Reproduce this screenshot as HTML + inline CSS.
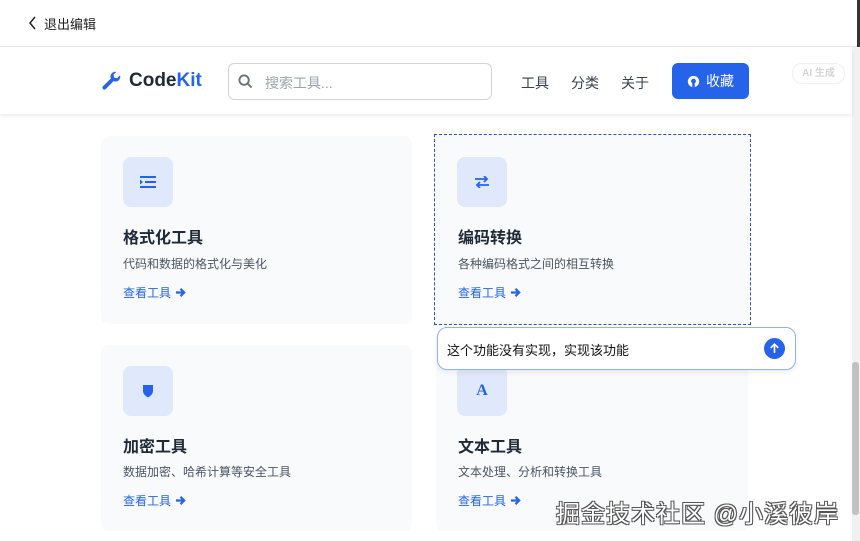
<!DOCTYPE html>
<html><head><meta charset="utf-8"><style>
*{box-sizing:border-box;margin:0;padding:0}
body{width:860px;height:541px;overflow:hidden;background:#fff;font-family:"Liberation Sans","Noto Sans CJK SC",sans-serif;position:relative}
.abs{position:absolute}
.top{left:0;top:0;width:860px;height:47px;background:#fff;border-bottom:1px solid #e5e7eb}
.nav{left:0;top:48px;width:852px;height:66px;background:#fff;box-shadow:0 2px 4px rgba(0,0,0,.08)}
.card{background:#f9fafb;border-radius:8px}
.ib{width:50px;height:50px;background:#e0e8fb;border-radius:8px;display:flex;align-items:center;justify-content:center;color:#2563eb}
.t{font-size:16px;font-weight:bold;color:#1f2937}
.d{font-size:12px;color:#4b5563}
.l{font-size:12px;color:#2563eb;display:flex;align-items:center;gap:4px}
</style></head><body>
<div class="abs top"></div>
<div class="abs" style="left:857px;top:0;width:3px;height:47px;background:#333"></div>
<svg class="abs" style="left:28px;top:16px" width="10" height="14" viewBox="0 0 10 14"><path d="M7 1L2 7l5 6" stroke="#222" stroke-width="1.5" fill="none"/></svg>
<div class="abs" style="left:44px;top:14px;font-size:13px;color:#222">退出编辑</div>
<div class="abs" style="left:852px;top:47px;width:8px;height:494px;background:#f1f1f1"></div>
<div class="abs" style="left:852px;top:362px;width:7px;height:153px;background:#c1c1c1;border-radius:3px"></div>
<div class="abs nav"></div>
<svg class="abs" style="left:101px;top:71px" width="21" height="21" viewBox="0 0 24 24"><path d="M22 6.5a5.5 5.5 0 0 1-7.6 5.1L5.3 20.7a2.2 2.2 0 0 1-3.1-3.1l9.1-9.1A5.5 5.5 0 0 1 17.5 1l-3.2 3.2.7 3.4 3.4.7L21.6 5c.3.5.4 1 .4 1.5z" fill="#2563eb"/></svg>
<div class="abs" style="left:129px;top:70px;font-size:19px;font-weight:bold;color:#1f2937">Code<span style="color:#2563eb">Kit</span></div>
<div class="abs" style="left:228px;top:63px;width:264px;height:37px;border:1px solid #d1d5db;border-radius:6px"></div>
<svg class="abs" style="left:238px;top:74px" width="15" height="15" viewBox="0 0 16 16"><circle cx="6.5" cy="6.5" r="5" stroke="#6b7280" stroke-width="2" fill="none"/><path d="M10.5 10.5l4 4" stroke="#6b7280" stroke-width="2"/></svg>
<div class="abs" style="left:265px;top:73px;font-size:14px;color:#9ca3af">搜索工具...</div>
<div class="abs" style="left:521px;top:73px;font-size:14px;color:#374151">工具</div>
<div class="abs" style="left:571px;top:73px;font-size:14px;color:#374151">分类</div>
<div class="abs" style="left:621px;top:73px;font-size:14px;color:#374151">关于</div>
<div class="abs" style="left:672px;top:63px;width:77px;height:36px;background:#2563eb;border-radius:6px;color:#fff;font-size:14px;display:flex;align-items:center;justify-content:center;gap:6px"><svg width="13" height="13" viewBox="0 0 16 16"><circle cx="8" cy="8" r="7" fill="#fff"/><circle cx="8" cy="7.5" r="3" fill="#2563eb"/><rect x="6.5" y="9" width="3" height="6" fill="#2563eb"/></svg>收藏</div>
<div class="abs" style="left:792px;top:63px;width:53px;height:21px;border:1px solid #f0f0f0;border-radius:10px;font-size:10px;color:#d4d4d4;font-weight:bold;text-align:center;line-height:19px">AI 生成</div>

<div class="abs card" style="left:101px;top:136px;width:311px;height:188px"></div>
<div class="abs ib" style="left:123px;top:157px"><svg width="16" height="12" viewBox="0 0 16 12"><rect x="0" y="0" width="16" height="2" fill="#2563eb"/><rect x="5" y="5" width="11" height="2" fill="#2563eb"/><rect x="0" y="10" width="16" height="2" fill="#2563eb"/><path d="M0 3.5l3 2.5-3 2.5z" fill="#2563eb"/></svg></div>
<div class="abs t" style="left:123px;top:224px">格式化工具</div>
<div class="abs d" style="left:123px;top:255px">代码和数据的格式化与美化</div>
<div class="abs l" style="left:123px;top:284px">查看工具 <svg width="11" height="11" viewBox="0 0 12 12"><path d="M1 6h8M6 2l4 4-4 4" stroke="#2563eb" stroke-width="2.4" fill="none"/></svg></div>

<div class="abs card" style="left:434px;top:134px;width:317px;height:191px;border:1px dashed #2b4fd1;border-radius:0"></div>
<div class="abs ib" style="left:457px;top:157px"><svg width="16" height="12" viewBox="0 0 16 12"><path d="M1 3h12M10 0l3 3-3 3M15 9H3M6 6l-3 3 3 3" stroke="#2563eb" stroke-width="1.8" fill="none"/></svg></div>
<div class="abs t" style="left:458px;top:224px">编码转换</div>
<div class="abs d" style="left:458px;top:255px">各种编码格式之间的相互转换</div>
<div class="abs l" style="left:458px;top:284px">查看工具 <svg width="11" height="11" viewBox="0 0 12 12"><path d="M1 6h8M6 2l4 4-4 4" stroke="#2563eb" stroke-width="2.4" fill="none"/></svg></div>

<div class="abs card" style="left:101px;top:345px;width:311px;height:186px"></div>
<div class="abs ib" style="left:123px;top:366px"><svg width="12" height="14" viewBox="0 0 12 14"><path d="M1 1h10v6c0 3-3 5.5-5 6.5C4 12.5 1 10 1 7z" fill="#2563eb"/></svg></div>
<div class="abs t" style="left:123px;top:433px">加密工具</div>
<div class="abs d" style="left:123px;top:463px">数据加密、哈希计算等安全工具</div>
<div class="abs l" style="left:123px;top:492px">查看工具 <svg width="11" height="11" viewBox="0 0 12 12"><path d="M1 6h8M6 2l4 4-4 4" stroke="#2563eb" stroke-width="2.4" fill="none"/></svg></div>

<div class="abs card" style="left:436px;top:345px;width:312px;height:186px"></div>
<div class="abs ib" style="left:457px;top:366px;font-family:'Liberation Serif',serif;font-weight:bold;font-size:16px">A</div>
<div class="abs t" style="left:458px;top:433px">文本工具</div>
<div class="abs d" style="left:458px;top:463px">文本处理、分析和转换工具</div>
<div class="abs l" style="left:458px;top:492px">查看工具 <svg width="11" height="11" viewBox="0 0 12 12"><path d="M1 6h8M6 2l4 4-4 4" stroke="#2563eb" stroke-width="2.4" fill="none"/></svg></div>

<div class="abs" style="left:437px;top:327px;width:359px;height:43px;background:#fff;border:1px solid #93b0ef;border-radius:10px;box-shadow:0 2px 6px rgba(0,0,0,.08)"></div>
<div class="abs" style="left:447px;top:340px;font-size:13px;color:#111">这个功能没有实现，实现该功能</div>
<div class="abs" style="left:764px;top:338px;width:21px;height:21px;border-radius:50%;background:#2563eb"></div>
<svg class="abs" style="left:768px;top:342px" width="13" height="13" viewBox="0 0 12 12"><path d="M6 10V2M2.5 5.5L6 2l3.5 3.5" stroke="#fff" stroke-width="1.5" fill="none"/></svg>

<div class="abs" style="left:556px;top:494px;font-size:24px;letter-spacing:1px;color:#fff;text-shadow:1px 1px 0 #555,-1px -1px 0 #555,1px -1px 0 #555,-1px 1px 0 #555;white-space:nowrap">掘金技术社区 @小溪彼岸</div>
</body></html>
